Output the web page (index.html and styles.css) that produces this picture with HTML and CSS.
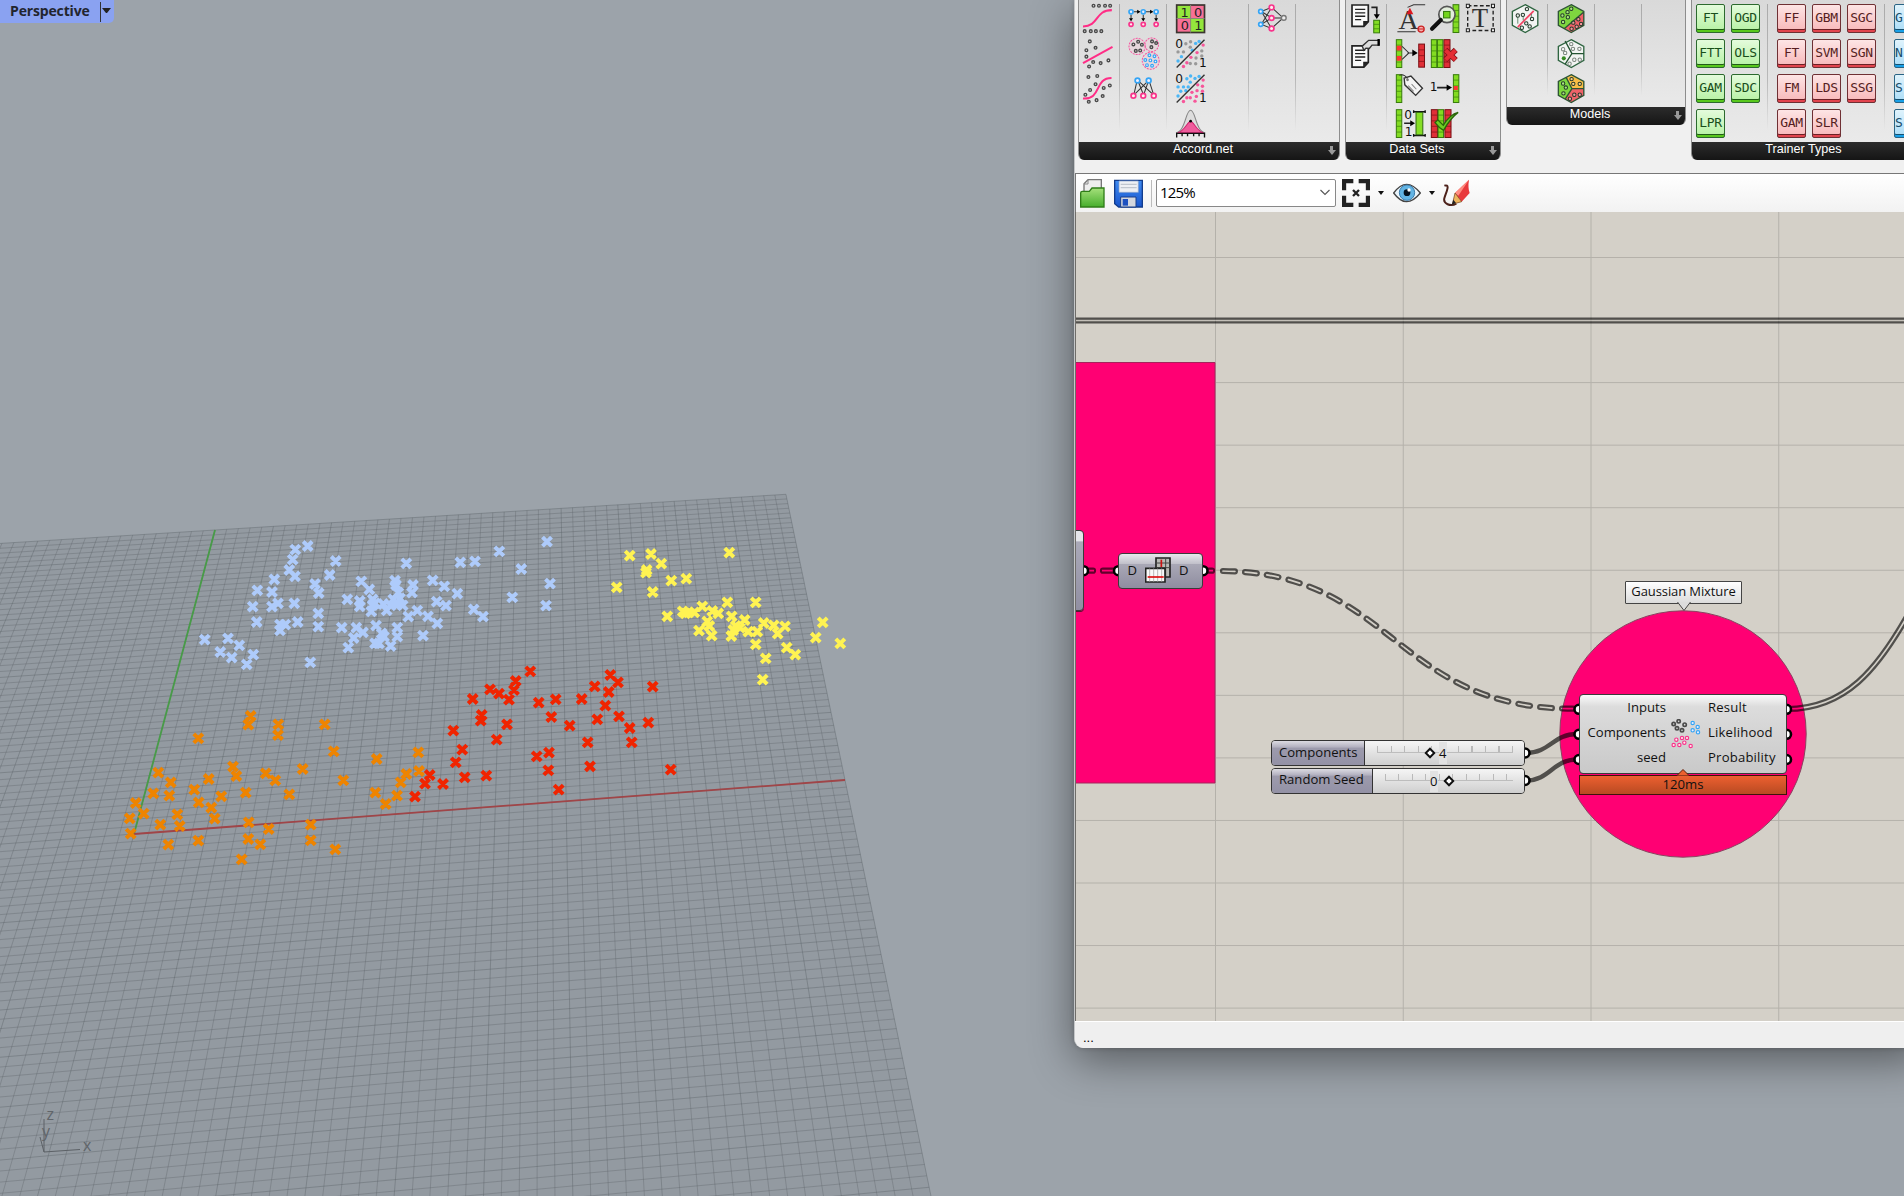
FILE: index.html
```html
<!DOCTYPE html>
<html lang="en">
<head>
<meta charset="utf-8">
<title>Gaussian Mixture</title>
<link rel="stylesheet" href="styles.css">
</head>
<body>
<main class="desktop">
  <svg class="viewport" id="viewport" viewBox="0 0 1904 1196" aria-label="Perspective viewport">
    <g id="grid"></g>
    <path class="axis-y" d="M134 834L215 530"/>
    <path class="axis-x" d="M134 834L845 780"/>
    <g id="points"></g>
    <g class="gizmo">
      <path d="M44 1119V1152L80 1149.5M44 1152L40 1137"/>
      <text x="46.500" y="1120">z</text><text x="42" y="1137">y</text><text x="83" y="1151">x</text>
    </g>
  </svg>

  <header class="view-tab"><span class="view-name">Perspective</span><span class="view-menu"></span></header>

  <section class="window">
    <div class="ribbon">
      <div class="panel accord">
        <div class="panel-body">
          <div class="group">
            <svg viewBox="0 0 84 84"><path class="pk" d="M0 66C48 66 34 18 85 18"/><g class="dk"><circle cx="31" cy="5" r="4"/><circle cx="47" cy="5" r="4"/><circle cx="65" cy="5" r="4"/><circle cx="80" cy="5" r="4"/><circle cx="5" cy="80" r="4"/><circle cx="23" cy="80" r="4"/><circle cx="38" cy="80" r="4"/><circle cx="54" cy="80" r="4"/></g></svg>
            <svg viewBox="0 0 84 84"><path class="pk" d="M0 71L87 23"/><g class="dk"><circle cx="20" cy="7" r="4"/><circle cx="37" cy="26" r="4"/><circle cx="10" cy="33" r="4"/><circle cx="10" cy="52" r="4"/><circle cx="75" cy="63" r="4"/><circle cx="52" cy="71" r="4"/><circle cx="30" cy="68" r="4"/><circle cx="18" cy="81" r="4"/></g></svg>
            <svg viewBox="0 0 84 84"><path class="pk" d="M0 72C56 76 32 12 84 12"/><g class="dk"><circle cx="16" cy="9" r="4"/><circle cx="42" cy="6" r="4"/><circle cx="37" cy="30" r="4"/><circle cx="21" cy="47" r="4"/><circle cx="7" cy="61" r="4"/><circle cx="79" cy="34" r="4"/><circle cx="61" cy="41" r="4"/><circle cx="58" cy="65" r="4"/><circle cx="40" cy="77" r="4"/><circle cx="17" cy="82" r="4"/></g></svg>
          </div>
          <div class="group">
            <svg viewBox="0 0 84 84"><path class="ln" d="M14 23H28M50 23H66M6 32V48M42 32V48M80 32V48"/><path d="M24 17l10 6-10 6zM62 17l10 6-10 6zM0 42h12l-6 9zM36 42h12l-6 9zM74 42h12l-6 9z"/><g class="bl"><circle cx="6" cy="23" r="6"/><circle cx="42" cy="23" r="6"/><circle cx="80" cy="23" r="6"/></g><g class="pc"><circle cx="6" cy="60" r="6"/><circle cx="42" cy="60" r="6"/><circle cx="80" cy="60" r="6"/></g></svg>
            <svg viewBox="0 0 84 84"><g class="dash"><circle cx="24" cy="22" r="24"/><circle cx="67" cy="17" r="20"/><circle cx="64" cy="64" r="25"/></g><g class="dk"><circle cx="13" cy="16" r="4"/><circle cx="27" cy="8" r="4"/><circle cx="38" cy="17" r="4"/><circle cx="20" cy="35" r="4"/><circle cx="33" cy="34" r="4"/><circle cx="68" cy="7" r="4"/><circle cx="80" cy="12" r="4"/><circle cx="66" cy="24" r="4"/></g><g class="bl thin"><circle cx="60" cy="48" r="4"/><circle cx="75" cy="51" r="4"/><circle cx="48" cy="62" r="4"/><circle cx="63" cy="63" r="4"/><circle cx="78" cy="66" r="4"/><circle cx="53" cy="77" r="4"/><circle cx="68" cy="79" r="4"/></g></svg>
            <svg viewBox="0 0 84 84"><path class="ln" d="M24 19L14 62M26 19L43 62M26 19L73 62M58 19L14 62M58 19L43 62M59 19L73 62"/><g class="bl"><circle cx="25" cy="19" r="7"/><circle cx="58" cy="19" r="7"/></g><g class="pc"><circle cx="13" cy="64" r="7"/><circle cx="42" cy="64" r="7"/><circle cx="73" cy="64" r="7"/></g></svg>
          </div>
          <div class="group two">
            <svg viewBox="0 0 84 84"><rect x="2" y="3" width="82" height="81" fill="#94e63c"/><path d="M43 3h41v40H43zM2 43h41v41H2z" fill="#f87096"/><rect x="2" y="3" width="82" height="81" fill="none" stroke="#3b3530" stroke-width="5"/><path d="M43 3V84M2 43H84" stroke="#887" stroke-width="3"/><g class="num"><text x="13" y="38">1</text><text x="53" y="38">0</text><text x="14" y="78">0</text><text x="54" y="78">1</text></g></svg>
            <svg viewBox="0 0 84 84"><use href="#scatter-grey"/></svg>
            <svg viewBox="0 0 84 84"><use href="#scatter-full"/></svg>
            <svg viewBox="0 0 84 84"><path d="M0 70C28 66 28 4 43 4S58 66 86 70Z" fill="#ddd" stroke="#888" stroke-width="3"/><path d="M5 70C26 66 34 36 43 36S60 66 81 70Z" fill="#ef5c9c" stroke="#d01f6c" stroke-width="3"/><path d="M0 72H86M2 72V84M18 72V80M34 72V80M52 72V80M68 72V80M84 72V84" stroke="#111" stroke-width="4"/><circle cx="43" cy="36" r="4"/></svg>
          </div>
          <div class="group">
            <svg viewBox="0 0 84 84"><path class="ln" d="M10 22L40 10L74 41L40 72L10 60L40 41L10 22M10 60L40 10M10 22L40 72M40 41H70"/><g class="bl"><circle cx="8" cy="22" r="6"/><circle cx="8" cy="60" r="6"/></g><g class="pc"><circle cx="40" cy="10" r="7"/><circle cx="40" cy="41" r="7"/><circle cx="40" cy="72" r="7"/></g><circle cx="76" cy="41" r="7" fill="#eee" stroke="#777" stroke-width="4"/></svg>
          </div>
          <div class="group last"></div>
        </div>
        <footer>Accord.net<i class="pin"></i></footer>
      </div>

      <div class="panel datasets">
        <div class="panel-body">
          <div class="group">
            <svg viewBox="0 0 84 84"><use href="#doc"/><path class="ln4" d="M60 10H76V34"/><path d="M67 30h18l-9 14z"/><rect x="67" y="48" width="17" height="37" fill="#83dc22" stroke="#397d0c" stroke-width="3"/><path d="M67 60H84M67 73H84" stroke="#397d0c" stroke-width="2"/></svg>
            <svg viewBox="0 0 84 84"><g transform="translate(0 17)"><use href="#doc"/></g><path d="M33 21L52 4H82V18H62L54 28L44 27L38 33Z" fill="#ddd" stroke="#333" stroke-width="4"/><path d="M78 0h7v20h-7z"/></svg>
          </div>
          <div class="group three">
            <svg viewBox="0 0 84 84"><path class="ln" d="M34 10L52 2H86M4 82H58"/><text x="7" y="75" class="serif" font-size="82">A</text><path d="M41 11l10 19H31z" fill="#dd1820"/><circle cx="74" cy="74" r="9" fill="#f4b0b0" stroke="#c22" stroke-width="4"/><path d="M66 74h16" stroke="#c22" stroke-width="3"/></svg>
            <svg viewBox="0 0 84 84"><use href="#strip-g"/><path class="ln" d="M18 22L38 41L18 60M34 41H50"/><path d="M48 31l16 10-16 10z"/><path d="M2 20h14v14H2zM2 50h14v14H2z" fill="#f33"/><g transform="translate(67 15)"><rect x="0" y="0" width="17" height="68" fill="#e03038" stroke="#7a1015" stroke-width="3"/><path d="M0 17H17M0 34H17M0 51H17" stroke="#7a1015" stroke-width="2"/></g></svg>
            <svg viewBox="0 0 84 84"><use href="#strip-g"/><path d="M24 12L44 6L78 42L58 63L26 32Z" fill="#f4f4f4" stroke="#333" stroke-width="4"/><circle cx="34" cy="17" r="4" fill="#777"/><path d="M46 30l14 15M36 34l16 17" stroke="#888" stroke-width="3"/><path d="M34 13Q22-2 10 4" class="ln"/></svg>
            <svg viewBox="0 0 84 84"><use href="#strip-g"/><text x="24" y="29" class="glyph">0</text><text x="26" y="80" class="glyph">1</text><path class="ln4" d="M24 42H46"/><path d="M42 33l14 9-14 9z"/><path d="M52 8H86M52 78H86M52 4v8M86 4v8M52 74v8M86 74v8" stroke="#111" stroke-width="4"/><rect x="59" y="10" width="20" height="66" fill="#86de26" stroke="#326b10" stroke-width="3"/></svg>
            <svg viewBox="0 0 84 84"><g transform="translate(65 2)"><rect x="0" y="0" width="17" height="82" fill="#83dc22" stroke="#397d0c" stroke-width="3"/><path d="M0 17H17M0 34H17M0 51H17M0 68H17" stroke="#397d0c" stroke-width="2"/></g><circle cx="47" cy="31" r="24" fill="#e2eddb" stroke="#555" stroke-width="5"/><rect x="37" y="22" width="19" height="19" fill="#73d51b" stroke="#347b0b" stroke-width="3"/><path d="M29 47L3 73" stroke="#111" stroke-width="12" stroke-linecap="round"/></svg>
            <svg viewBox="0 0 84 84"><g transform="translate(37)"><use href="#strip-r"/></g><use href="#strip-g"/><g transform="translate(18)"><use href="#strip-g"/></g><path d="M42 32L73 62M73 32L42 62" stroke="#861218" stroke-width="17"/><path d="M43 33L72 61M72 33L43 61" stroke="#e42d34" stroke-width="12"/></svg>
            <svg viewBox="0 0 84 84"><text x="-4" y="51" class="glyph">1</text><path class="ln4" d="M18 40H50"/><path d="M46 31l16 9-16 9z"/><g transform="translate(65)"><use href="#strip-g"/><path d="M2 35h12v12H2z" fill="#f33"/></g></svg>
            <svg viewBox="0 0 84 84"><use href="#strip-r"/><g transform="translate(20)"><use href="#strip-g"/></g><g transform="translate(40)"><use href="#strip-r"/></g><path d="M12 40L20 32L36 48Q56 16 80 10Q56 28 37 63Q24 56 12 40Z" fill="#6dce24" stroke="#2a650b" stroke-width="4"/></svg>
            <svg viewBox="0 0 84 84"><rect x="5" y="5" width="75" height="73" fill="none" stroke="#222" stroke-width="4" stroke-dasharray="11 7"/><path d="M1 1h9v9H1zM75 1h9v9h-9zM1 73h9v9H1zM75 73h9v9h-9z" fill="#eee" stroke="#222" stroke-width="3"/><text x="17" y="68" class="serif" font-size="79">T</text></svg>
          </div>
        </div>
        <footer>Data Sets<i class="pin"></i></footer>
      </div>

      <div class="panel models">
        <div class="panel-body">
          <div class="group">
            <svg viewBox="0 0 84 84"><path class="hex" d="M42 2L79 22V63L42 84L4 63V22Z"/><path d="M20 68L67 20" stroke="#f44565" stroke-width="5"/><g class="dt"><circle cx="20" cy="34" r="5"/><circle cx="35" cy="32" r="5"/><circle cx="47" cy="15" r="5"/><circle cx="62" cy="44" r="5"/><circle cx="45" cy="57" r="5"/><circle cx="32" cy="70" r="5"/><circle cx="55" cy="66" r="5"/></g><path d="M20 39V58M36 38V48M60 29V38" stroke="#265e36" stroke-width="2"/></svg>
          </div>
          <div class="group">
            <svg viewBox="0 0 84 84"><path fill="#7ed63f" d="M42 2L79 22L24 74L4 63V22Z"/><path fill="#f06068" d="M79 22V63L42 84L24 72Z"/><path class="hexo" d="M42 2L79 22V63L42 84L4 63V22ZM22 72L78 24"/><g class="dt nf"><circle cx="42" cy="14" r="5"/><circle cx="31" cy="24" r="5"/><circle cx="16" cy="34" r="5"/><circle cx="32" cy="39" r="5"/><circle cx="18" cy="53" r="5"/><circle cx="63" cy="45" r="5"/><circle cx="48" cy="55" r="5"/><circle cx="71" cy="59" r="5"/><circle cx="58" cy="67" r="5"/><circle cx="43" cy="73" r="5"/></g></svg>
            <svg viewBox="0 0 84 84"><path class="hex" d="M42 2L79 22V63L42 84L4 63V22Z"/><path d="M24 6L44 43L24 74M44 43H79" fill="none" stroke="#245432" stroke-width="4"/><g class="dt nf pale"><circle cx="42" cy="15" r="5"/><circle cx="47" cy="29" r="5"/><circle cx="66" cy="29" r="5"/><circle cx="18" cy="30" r="5"/><circle cx="24" cy="41" r="5"/><circle cx="51" cy="61" r="5"/><circle cx="67" cy="61" r="5"/><circle cx="37" cy="73" r="5"/></g><circle cx="20" cy="57" r="6" fill="#358a22"/></svg>
            <svg viewBox="0 0 84 84"><path fill="#7ed63f" d="M27 10L4 22V63L24 74L44 43Z"/><path fill="#f8bd45" d="M42 2L79 22V43H44L27 10Z"/><path fill="#ef6268" d="M79 43V63L42 84L24 74L44 43Z"/><path class="hexo" d="M42 2L79 22V63L42 84L4 63V22ZM27 10L44 43L24 74M44 43H79"/><g class="dt nf"><circle cx="43" cy="15" r="5"/><circle cx="48" cy="29" r="5"/><circle cx="67" cy="29" r="5"/><circle cx="18" cy="28" r="5"/><circle cx="26" cy="40" r="5"/><circle cx="19" cy="57" r="5"/><circle cx="51" cy="61" r="5"/><circle cx="67" cy="61" r="5"/><circle cx="38" cy="73" r="5"/></g></svg>
          </div>
          <div class="group"></div>
          <div class="group last"></div>
        </div>
        <footer>Models<i class="pin"></i></footer>
      </div>

      <div class="panel trainers">
        <div class="panel-body">
          <div class="group green"><b>FT</b><b>FTT</b><b>GAM</b><b>LPR</b><b>OGD</b><b>OLS</b><b>SDC</b></div>
          <div class="group red"><b>FF</b><b>FT</b><b>FM</b><b>GAM</b><b>GBM</b><b>SVM</b><b>LDS</b><b>SLR</b><b>SGC</b><b>SGN</b><b>SSG</b></div>
          <div class="group blue last"><b>G</b><b>N</b><b>S</b><b>S</b></div>
        </div>
        <footer>Trainer Types</footer>
      </div>
    </div>

    <div class="toolbar">
      <svg class="t-open" width="25" height="29" viewBox="0 0 75 87"><path d="M12 44V14L24 2H64V44Z" fill="#eee" stroke="#777" stroke-width="4"/><path d="M12 15H24V3" fill="none" stroke="#888" stroke-width="3"/><path d="M2 84V42Q2 37 7 37H28L36 27H72V84Z" fill="url(#leaf)" stroke="#2f7d19" stroke-width="4"/></svg>
      <svg class="t-save" width="29" height="29" viewBox="0 0 87 87"><path d="M2 4H85V84H14L2 74Z" fill="url(#blue)" stroke="#123c8c" stroke-width="4"/><path d="M15 6H73V40H15Z" fill="#eef0f4" stroke="#8aa0c8" stroke-width="2"/><path d="M20 16H68M20 26H68" stroke="#c0c6cf" stroke-width="4"/><path d="M20 54H66V84H20Z" fill="#d4d7de" stroke="#1b3f88" stroke-width="3"/><path d="M26 60H42V80H26Z" fill="#1c50c0"/></svg>
      <span class="sep"></span>
      <div class="combo"><span>125%</span><svg width="10" height="7" viewBox="0 0 10 7"><path d="M.5 1L5 5.500L9.500 1" fill="none" stroke="#555" stroke-width="1.100"/></svg></div>
      <svg class="t-fit" width="28" height="28" viewBox="0 0 84 84"><path d="M6 34V6H34M50 6H78V34M78 50V78H50M34 78H6V50" fill="none" stroke="#222" stroke-width="13"/><path d="M33 33L51 51M51 33L33 51" stroke="#222" stroke-width="7"/></svg>
      <i class="drop"></i>
      <svg class="t-eye" width="28" height="20" viewBox="0 0 84 60"><path d="M2 30Q40-22 82 30Q40 82 2 30Z" fill="#eaf4fa" stroke="#444" stroke-width="4"/><circle cx="42" cy="29" r="23" fill="#62b4e4" stroke="#3a7cac" stroke-width="3"/><circle cx="42" cy="29" r="10" fill="#06121e"/><circle cx="48" cy="21" r="5" fill="#fff"/></svg>
      <i class="drop"></i>
      <svg class="t-pen" width="28" height="28" viewBox="0 0 84 84"><path d="M4 20C24 14 8 42 4 58S22 84 40 74" fill="none" stroke="#4c211a" stroke-width="6"/><path d="M78 2Q74 26 80 42L56 68L36 42Z" fill="#e8393c"/><path d="M78 2L46 50L36 42Z" fill="#ff8c80"/><path d="M36 42L56 68L28 76Z" fill="#edb45c" stroke="#6e3518" stroke-width="2"/><path d="M31 62L39 72L26 78Z" fill="#222"/></svg>
    </div>

    <div class="canvas">
      <svg class="wires" viewBox="1076 212 828 809">
        <defs>
          <mask id="hollow" maskUnits="userSpaceOnUse" x="1076" y="212" width="828" height="809">
            <rect x="1076" y="212" width="828" height="809" fill="#fff"/>
            <g fill="none" stroke="#000" stroke-width="1.700">
              <path class="dashed" d="M1223 571C1394 573 1395 708.700 1573 708.700"/>
              <path d="M1787 709C1846 709 1878 668 1908 615M1084 570.700H1094M1102 570.700H1116M1204 570.700H1213M1076 320.500H1904"/>
            </g>
          </mask>
          <pattern id="cells" x="1215" y="257" width="187.750" height="62.550" patternUnits="userSpaceOnUse"><path d="M.5 0V62.550M0 .5H187.750" stroke="#000" stroke-opacity=".15" fill="none"/></pattern>
        </defs>
        <rect x="1076" y="212" width="828" height="809" fill="url(#cells)"/>
        <path d="M1070 362.500H1215V783H1070Z" fill="#ff0073" stroke="#a5245c" stroke-width="1"/>
        <circle cx="1683" cy="734" r="123.200" fill="#ff0073" stroke="#8a4360" stroke-width="1"/>
        <g mask="url(#hollow)" fill="none" stroke="#000" stroke-opacity=".62" stroke-width="6.200">
          <path class="dashed" d="M1223 571C1394 573 1395 708.700 1573 708.700"/>
          <path d="M1787 709C1846 709 1878 668 1908 615"/>
          <path d="M1076 320.500H1904"/>
          <path stroke-linecap="round" d="M1084 570.700H1093M1103 570.700H1116M1204 570.700H1212"/>
        </g>
        <path d="M1526 753C1550 753 1553 734 1577 734M1526 780.500C1550 780.500 1553 759.500 1577 759.500" fill="none" stroke="#000" stroke-opacity=".62" stroke-width="4.500"/>
        <g fill="#fff" stroke="#000" stroke-width="2.600">
          <circle cx="1083.500" cy="570.700" r="4.500"/><circle cx="1118.500" cy="570.700" r="4.500"/><circle cx="1203" cy="570.700" r="4.500"/>
          <circle cx="1525" cy="753" r="4.500"/><circle cx="1525" cy="780.500" r="4.500"/>
          <circle cx="1579" cy="709.300" r="4.500"/><circle cx="1579" cy="734.300" r="4.500"/><circle cx="1579" cy="759.500" r="4.500"/>
          <circle cx="1786.500" cy="709.300" r="4.500"/><circle cx="1786.500" cy="734.300" r="4.500"/><circle cx="1786.500" cy="759.500" r="4.500"/>
        </g>
      </svg>

      <div class="node clipped"></div>
      <div class="node flip"><span>D</span>
        <svg width="26" height="26" viewBox="0 0 78 78"><path d="M33 3H75V60H33Z" fill="#b9b9b5" stroke="#222" stroke-width="5"/><path d="M33 18H75M33 32H75M62 3V60" stroke="#444" stroke-width="3"/><path d="M49 8V30" stroke="#c11" stroke-width="5"/><path d="M2 34H60V75H2Z" fill="#fafafa" stroke="#222" stroke-width="5"/><path d="M14 34V75M26 34V75M38 34V75M50 34V75" stroke="#999" stroke-width="2"/><path d="M8 60H56" stroke="#d11" stroke-width="5"/></svg>
        <span>D</span></div>

      <div class="slider s-comp"><span class="name">Components</span><div class="track"><i class="ticks"></i><i class="knob"></i><span class="value">4</span></div></div>
      <div class="slider s-seed"><span class="name">Random Seed</span><div class="track"><i class="ticks"></i><span class="value">0</span><i class="knob"></i></div></div>

      <div class="tag">Gaussian Mixture<svg width="16" height="10" viewBox="0 0 16 10"><path d="M1.500 0L8 8.500L14.500 0" fill="#dcdcdc" stroke="#444"/></svg></div>

      <div class="node mixture">
        <div class="ins"><span>Inputs</span><span>Components</span><span>seed</span></div>
        <svg width="30" height="30" viewBox="0 0 90 90"><g class="dk big"><circle cx="8" cy="15" r="5"/><circle cx="23" cy="7" r="5"/><circle cx="41" cy="17" r="5"/><circle cx="18" cy="28" r="5"/><circle cx="33" cy="34" r="5"/></g><g class="bl thin"><circle cx="65" cy="12" r="5"/><circle cx="80" cy="24" r="5"/><circle cx="65" cy="34" r="5"/><circle cx="81" cy="40" r="5"/></g><g class="pc thin"><circle cx="16" cy="62" r="5"/><circle cx="33" cy="57" r="5"/><circle cx="48" cy="57" r="5"/><circle cx="8" cy="78" r="5"/><circle cx="25" cy="78" r="5"/><circle cx="40" cy="71" r="5"/><circle cx="59" cy="81" r="5"/></g></svg>
        <div class="outs"><span>Result</span><span>Likelihood</span><span>Probability</span></div>
      </div>
      <div class="timing">120ms<svg width="14" height="8" viewBox="0 0 14 8"><path d="M1 7.500L7 1.500L13 7.500" fill="#eb612f" stroke="#5b1c0b"/></svg></div>
    </div>
    <footer class="status">...</footer>
  </section>
</main>

<svg class="defs" width="0" height="0">
  <defs>
    <linearGradient id="leaf" x2="0" y2="1"><stop stop-color="#a5e07b"/><stop offset="1" stop-color="#46ae2c"/></linearGradient>
    <linearGradient id="blue" x2="0" y2="1"><stop stop-color="#3f8cf2"/><stop offset="1" stop-color="#1955cc"/></linearGradient>
    <g id="strip-g"><rect x="1" y="2" width="16" height="82" fill="#83dc22" stroke="#397d0c" stroke-width="3"/><path d="M1 18H17M1 35H17M1 51H17M1 68H17" stroke="#397d0c" stroke-width="2"/></g>
    <g id="strip-r"><rect x="1" y="2" width="18" height="82" fill="#e03038" stroke="#7a1015" stroke-width="3"/><path d="M1 18H19M1 35H19M1 51H19M1 68H19" stroke="#7a1015" stroke-width="2"/></g>
    <g id="doc"><path d="M3 3H51V52L38 66H3Z" fill="#fafafa" stroke="#222" stroke-width="5"/><path d="M12 16H42M12 26H42M12 36H42M12 46H30" stroke="#222" stroke-width="4"/><path d="M36 66V50H52Z" fill="#222"/></g>
    <g id="scatter-grey"><g fill="#999"><circle cx="29" cy="14" r="5"/><circle cx="43" cy="8" r="5"/><circle cx="42" cy="24" r="5"/><circle cx="6" cy="38" r="5"/><circle cx="22" cy="38" r="5"/><circle cx="76" cy="35" r="5"/><circle cx="76" cy="50" r="5"/><circle cx="58" cy="73" r="5"/><circle cx="42" cy="72" r="5"/><circle cx="59" cy="56" r="5"/></g><g fill="#4bb6f5"><circle cx="58" cy="13" r="5"/><circle cx="68" cy="7" r="5"/><circle cx="48" cy="33" r="5"/><circle cx="6" cy="65" r="5"/><circle cx="16" cy="52" r="5"/></g><g fill="#f7569a"><circle cx="80" cy="18" r="5"/><circle cx="62" cy="40" r="5"/><circle cx="44" cy="54" r="5"/><circle cx="32" cy="70" r="5"/><circle cx="22" cy="81" r="5"/></g><path d="M2 84L84 2" stroke="#333" stroke-width="4"/><text x="-2" y="27" class="glyph">0</text><text x="68" y="84" class="glyph">1</text></g>
    <g id="scatter-full"><g fill="#4bb6f5"><circle cx="32" cy="14" r="5"/><circle cx="43" cy="6" r="5"/><circle cx="42" cy="24" r="5"/><circle cx="6" cy="38" r="5"/><circle cx="22" cy="38" r="5"/><circle cx="56" cy="13" r="5"/><circle cx="68" cy="7" r="5"/><circle cx="36" cy="38" r="5"/><circle cx="6" cy="65" r="5"/><circle cx="14" cy="51" r="5"/><circle cx="29" cy="49" r="5"/></g><g fill="#f7569a"><circle cx="80" cy="18" r="5"/><circle cx="64" cy="32" r="5"/><circle cx="78" cy="36" r="5"/><circle cx="62" cy="49" r="5"/><circle cx="78" cy="51" r="5"/><circle cx="47" cy="54" r="5"/><circle cx="60" cy="66" r="5"/><circle cx="42" cy="70" r="5"/><circle cx="56" cy="80" r="5"/><circle cx="32" cy="70" r="5"/><circle cx="22" cy="81" r="5"/></g><path d="M2 84L84 2" stroke="#333" stroke-width="4"/><text x="-2" y="27" class="glyph">0</text><text x="68" y="84" class="glyph">1</text></g>
  </defs>
</svg>
<script src="scene.js"></script>
</body>
</html>
```
FILE: styles.css
```css
* { box-sizing: border-box; }
html, body { margin: 0; height: 100%; overflow: hidden; }
body { background: #9ca3aa; font-family: "Open Sans", "Noto Sans", sans-serif; }
.desktop { position: relative; width: 1904px; height: 1196px; overflow: hidden; }
.defs { position: absolute; }
.viewport { display: block; width: 1904px; height: 1196px; }
.ground { fill: #939aa1; }
.minor { stroke: #5d646a; stroke-opacity: .36; stroke-width: 1; fill: none; }
.major { stroke: #5a6167; stroke-opacity: .4; stroke-width: 1; fill: none; }
.axis-x { stroke: #a04548; stroke-width: 1.8; }
.axis-y { stroke: #489b48; stroke-width: 1.8; }
.gizmo { fill: #60656a; font: 16px "Open Sans", sans-serif; }
.gizmo path { fill: none; stroke: #5c6166; stroke-width: 1; }
.mark { fill: none; stroke-width: 4; }

.view-tab { position: absolute; left: 0; top: 0; display: flex; width: 114px; height: 23px; padding-left: 10px; background: #8aa2f1; border-bottom-right-radius: 5px; color: #22252e; }
.view-name { width: 90px; font-size: 14px; font-weight: 700; line-height: 21px; letter-spacing: -.15px; }
.view-menu { width: 11px; height: 20px; margin-top: 2px; border-left: 1px solid #333; }
.view-menu::after { content: ""; display: block; margin: 6px 0 0 1px; border: 4.5px solid transparent; border-top: 5px solid #222; border-bottom: 0; }

.window { position: absolute; left: 1074px; top: 0; width: 850px; height: 1048px; display: flex; flex-direction: column; background: #f0f0f0; border-left: 1px solid #c4c6c8; border-bottom-left-radius: 9px; box-shadow: 0 12px 44px rgba(0, 0, 0, .45), 0 0 5px rgba(0, 0, 0, .2); overflow: visible; }
.ribbon { display: flex; gap: 5px; align-items: flex-start; height: 173px; padding-left: 3px; }
.panel { flex: none; border: 1px solid #8d8d8d; border-top: 0; border-bottom: 0; border-radius: 0 0 6px 6px; background: linear-gradient(#d9d9d9, #ececec); overflow: hidden; }
.accord { width: 262px; }
.datasets { width: 156px; }
.models { width: 180px; }
.trainers { width: 300px; }
.panel-body { display: flex; height: 142px; padding-top: 4px; }
.models .panel-body { height: 107px; }
.group { flex: none; display: grid; grid-template-rows: repeat(4, 28px); grid-auto-flow: column; grid-auto-columns: 28px; gap: 7px; height: 126px; min-width: 47px; padding: 0 9px; border-right: 1px solid; border-image: linear-gradient(#aaa, #b8b8b8 60%, transparent) 1; }
.models .group { height: 91px; grid-template-rows: repeat(3, 28px); }
.group:first-child { min-width: 41px; padding: 0 8px 0 4px; }
.group.two { width: 82px; }
.group.last { border: 0; }
.group svg { width: 28.5px; height: 28.5px; overflow: visible; }
.datasets .group:first-child svg { margin-left: 1px; }
.panel footer { position: relative; height: 18px; background: linear-gradient(#2c2c2c, #151515); color: #fff; font: 12.6px/15.5px "Liberation Sans", Arial, sans-serif; text-align: center; padding-right: 12px; }
.trainers footer { padding-right: 75px; }
.pin { position: absolute; right: 6px; top: 4px; width: 3px; height: 4px; background: #999; }
.pin::after { content: ""; position: absolute; left: -2.5px; top: 4px; border: 4px solid transparent; border-top: 5px solid #999; border-bottom: 0; }
.group b { display: block; width: 29px; height: 29px; border: 1px solid; border-radius: 2px; font: 13px/26px "DejaVu Sans Mono", monospace; letter-spacing: -.4px; text-align: center; white-space: nowrap; overflow: hidden; }
.green b { color: #194e1b; border-color: #2c6a2e; background: linear-gradient(#e4fbdc, #b5f2a2); box-shadow: inset 0 -2px #58c81c, inset 0 -3px #225a18; }
.red b { color: #551e22; border-color: #6f3034; background: linear-gradient(#fde5e5, #f8b6b8); box-shadow: inset 0 -2px #e2444e, inset 0 -3px #6b2024; }
.blue b { color: #174c6b; border-color: #2a6484; background: linear-gradient(#e0f3fc, #a9dcf7); box-shadow: inset 0 -2px #18a0e8, inset 0 -3px #17506f; text-align: left; }

.pk { fill: none; stroke: #ff2d86; stroke-width: 6; }
.dk { fill: none; stroke: #4a4a4a; stroke-width: 4; }
.bl { fill: #eef; stroke: #35a5f5; stroke-width: 5; }
.pc { fill: #fee; stroke: #f8348c; stroke-width: 5; }
.thin { stroke-width: 3.5; }
.ln { fill: none; stroke: #333; stroke-width: 3; }
.ln4 { fill: none; stroke: #222; stroke-width: 5; }
.dash { fill: #f4c8d8; fill-opacity: .35; stroke: #f558a0; stroke-width: 3; stroke-dasharray: 6 3; }
.num { font: 38px "DejaVu Sans", sans-serif; fill: #222; }
.glyph { font: 36px "DejaVu Sans", sans-serif; fill: #111; }
.serif { font-family: "Liberation Serif", serif; fill: #333; }
.hex { fill: #f2f4f2; stroke: #2f6541; stroke-width: 4; }
.hexo { fill: none; stroke: #2e5536; stroke-width: 4; }
.dt { fill: #e8eee8; stroke: #23382a; stroke-width: 3; }
.dt.nf { fill: #fff; fill-opacity: .35; }
.dt.pale { stroke: #79847c; }

.toolbar { display: flex; align-items: center; height: 39px; padding-left: 4px; border-top: 1px solid #777; border-left: 1px solid #777; background: linear-gradient(#fff, #f2f2f2); }
.toolbar svg { flex: none; }
.t-save { margin-left: 9px; }
.sep { width: 1px; height: 27px; margin-left: 8px; background: #bbb; }
.combo { display: flex; align-items: center; justify-content: space-between; width: 180px; height: 28px; margin-left: 4px; padding: 0 5px 0 3px; border: 1px solid #888; border-radius: 2px; background: #fff; font-size: 15px; line-height: 20px; padding-bottom: 2px; letter-spacing: -.8px; }
.t-fit { margin-left: 6px; }
.drop { margin-left: 8px; border: 3.5px solid transparent; border-top: 4px solid #111; border-bottom: 0; }
.t-eye { margin-left: 9px; }
.t-pen { margin-left: 8px; }

.canvas { position: relative; flex: 1; border-left: 1px solid #6f6d69; background: #d4d0c8; overflow: hidden; font-size: 13.1px; color: #111; }
.wires { position: absolute; left: 0; top: 0; width: 828px; height: 809px; }
.dashed { stroke-dasharray: 11.8 10.2; stroke-linecap: round; }
.node { position: absolute; display: flex; border: 1.5px solid #3a3a3a; border-radius: 4px; }
.clipped { left: -30px; top: 318px; width: 38px; height: 81px; background: linear-gradient(#e5e5ea 12%, #aaa9b8 14%, #918fa2); box-shadow: 0 1px #5a1030; }
.flip { left: 42px; top: 341px; width: 85px; height: 36px; padding: 0 5px 3px 0; align-items: center; justify-content: center; gap: 8px; background: linear-gradient(#e8e8ec, #c2c1cb 28%, #a9a8b6 30%, #8f8da0); }
.mixture { left: 503px; top: 482px; width: 208px; height: 80px; background: linear-gradient(#fafafa, #dcdcdc 15%, #c9c9c9); }
.ins, .outs { display: flex; flex-direction: column; line-height: 25px; }
.ins { width: 86px; text-align: right; }
.mixture svg { margin: 24px 0 0 5px; }
.outs { margin-left: 7px; letter-spacing: .2px; }
.big { stroke-width: 5; }
.timing { position: absolute; left: 503px; top: 563px; width: 208px; height: 20px; border: 1.5px solid #3d130a; background: linear-gradient(#ed6030, #b84a22); line-height: 16px; text-align: center; }
.timing svg { position: absolute; left: 96px; top: -8px; }
.tag { position: absolute; left: 549px; top: 369px; width: 117px; height: 23px; border: 1.5px solid #444; border-radius: 1px; background: linear-gradient(#fff, #dcdcdc); font-size: 13px; letter-spacing: -.1px; line-height: 19px; text-align: center; white-space: nowrap; }
.tag svg { position: absolute; left: 50px; top: 20px; }
.slider { position: absolute; left: 195px; width: 254px; height: 26px; display: flex; border: 1.5px solid #333; border-radius: 4px; overflow: hidden; line-height: 22px; }
.s-comp { top: 528px; }
.s-seed { top: 556px; line-height: 21px; }
.name { width: 93px; border-right: 1.5px solid #333; padding-left: 7px; white-space: nowrap; background: linear-gradient(#dcdbe2, #b3b1c0 25%, #9d9bad 30%, #9391a5); }
.s-seed .name { width: 101px; }
.track { position: relative; flex: 1; display: flex; align-items: center; background: linear-gradient(#f5f5f5, #cfcfcf); }
.ticks { position: absolute; left: 12px; right: 11px; top: 5px; height: 7px; border-bottom: 1px solid #bdbdbd; background: repeating-linear-gradient(90deg, #b9b9b9 0 1px, transparent 1px 13.500px); }
.knob { position: relative; width: 8px; height: 8px; border: 2px solid #111; background: #fff; transform: rotate(45deg); }
.s-comp .knob { margin-left: 61px; }
.s-comp .value { margin-left: 5px; position: relative; background: #e2e2e2; }
.s-seed .value { margin-left: 57px; position: relative; background: #e2e2e2; }
.s-seed .knob { margin-left: 7px; }
.status { height: 27px; border-top: 1px solid #fff; border-radius: 0 0 0 9px; padding: 5px 0 0 8px; background: #efefef; font: 13px/21px "Liberation Sans", sans-serif; }
```
FILE: scene.js
```js
const NS = "http://www.w3.org/2000/svg";
const grid = document.getElementById("grid");
const points = document.getElementById("points");

function add(parent, name, attrs) {
  const el = document.createElementNS(NS, name);
  for (const key in attrs) el.setAttribute(key, attrs[key]);
  parent.appendChild(el);
}

// Perspective projection of the construction plane, u and v run from -1 to 1.
const g = 0.0330, h = 0.2487;
const a = 845 * (1 + g) - 134, b = 215 * (1 + h) - 134;
const d = 780 * (1 + g) - 834, e = 530 * (1 + h) - 834;
function project(u, v) {
  const w = g * u + h * v + 1;
  return ((a * u + b * v + 134) / w).toFixed(2) + " " + ((d * u + e * v + 834) / w).toFixed(2);
}

add(grid, "path", { class: "ground", d: `M${project(-1, -1)}L${project(1, -1)}L${project(1, 1)}L${project(-1, 1)}Z` });
let minor = "", major = "";
const CELLS = 50;
for (let i = -CELLS; i <= CELLS; i++) {
  const t = i / CELLS;
  const seg = `M${project(t, -1)}L${project(t, 1)}M${project(-1, t)}L${project(1, t)}`;
  if (i % 5) minor += seg; else major += seg;
}
add(grid, "path", { class: "minor", d: minor });
add(grid, "path", { class: "major", d: major });

// Each cluster: colour, origin, and point offsets in thirds of a pixel.
const clusters = [
  ["#ee8400", 0, 480, "752,708 745,734 835,733 834,765 974,733 595,775 1001,814 1130,837 1255,817 475,878 512,907 460,940 508,947 407,969 431,1001 389,1015 392,1061 481,1034 532,1003 539,1038 505,1094 595,1082 583,929 626,897 596,967 634,983 644,1016 664,949 699,860 709,888 797,880 826,901 737,938 868,943 908,867 1030,901 746,1027 806,1047 745,1077 781,1093 725,1138 932,1034 932,1081 1006,1108 1126,938 1157,972 1191,947 1202,907 1219,882 1257,873"],
  ["#aecbfb", 180, 520, "346,89 383,78 338,119 328,150 345,169 283,178 467,123 449,165 405,192 416,219 232,211 276,216 218,260 276,260 294,250 343,250 230,306 353,306 300,314 316,314 300,331 415,280 415,320 74,359 144,355 178,376 121,396 155,413 220,404 200,433 391,427 679,130 544,184 568,208 502,238 539,243 539,259 578,238 578,255 574,274 585,250 610,252 620,271 632,256 645,182 648,195 655,218 699,195 696,218 640,238 660,235 668,256 650,255 758,181 793,199 832,221 770,245 798,257 841,127 885,124 958,94 1024,147 1101,65 1110,191 997,232 1098,257 881,268 909,290 712,272 685,290 744,289 772,310 729,347 485,323 529,323 549,337 521,354 505,383 588,317 605,340 612,350 585,370 597,370 632,378 652,323 652,350"],
  ["#fff352", 580, 520, "149,107 213,102 244,131 200,150 198,158 448,98 110,202 218,216 274,182 319,176 262,289 308,274 316,280 326,277 343,277 367,259 397,273 415,280 442,247 527,247 382,304 388,318 357,332 395,347 455,289 494,300 467,318 480,323 454,348 460,330 505,335 532,335 551,309 581,316 615,319 593,341 527,373 557,415 620,383 646,404 728,307 707,353 781,370 548,479"],
  ["#f02400", 400, 650, "391,64 347,93 342,120 270,118 297,131 327,149 218,147 245,195 242,212 160,242 321,223 290,269 187,299 167,337 194,382 259,377 89,375 75,401 129,402 45,440 416,158 467,148 454,201 509,227 545,147 584,109 631,75 654,97 626,126 616,167 592,208 657,199 689,234 745,218 758,110 695,277 563,277 570,349 410,319 447,308 445,361 476,419 812,359"]
];
for (const [color, ox, oy, list] of clusters) {
  let path = "";
  for (const pair of list.split(" ")) {
    const [x, y] = pair.split(",").map(Number);
    path += `M${(ox + x / 3 - 4.5).toFixed(1)} ${(oy + y / 3 - 4.5).toFixed(1)}l9 9m0-9l-9 9`;
  }
  add(points, "path", { class: "mark", stroke: color, d: path });
}
```
